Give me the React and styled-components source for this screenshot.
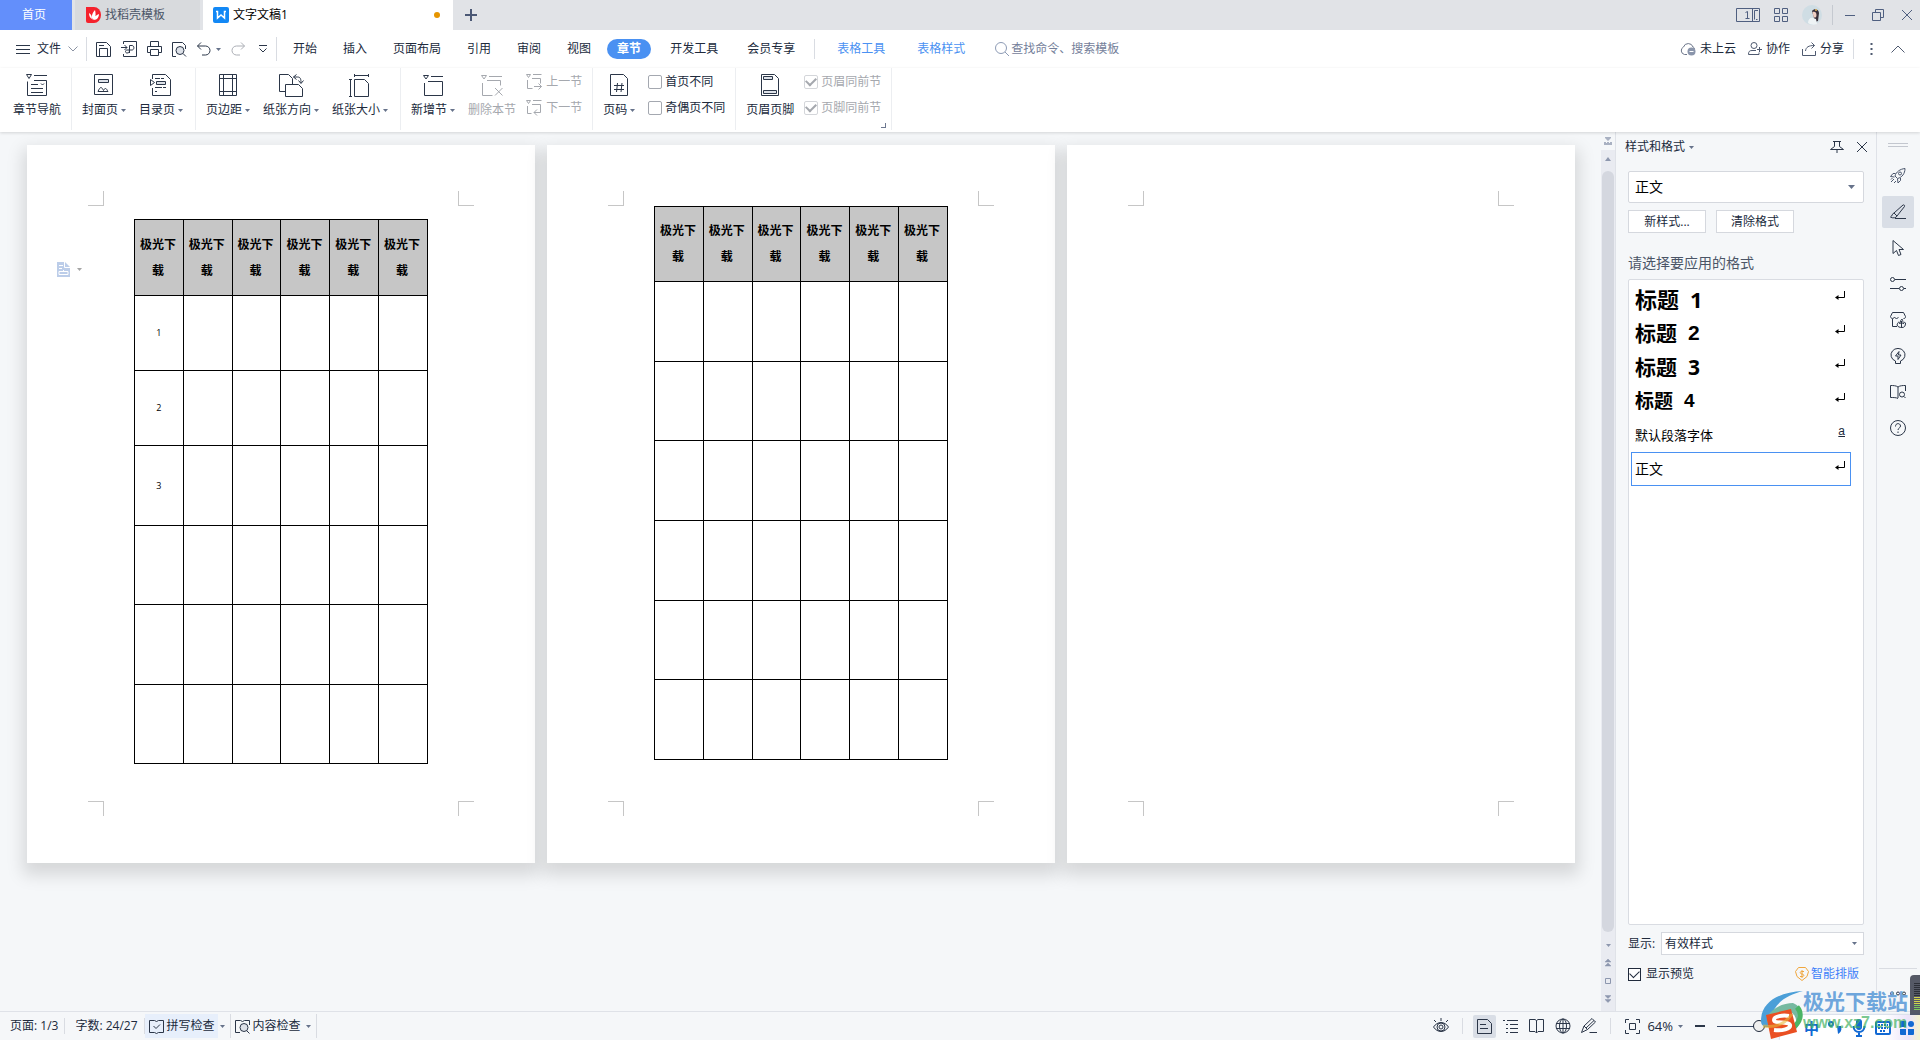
import { useState } from 'react'
import styled, { createGlobalStyle } from 'styled-components'

const HEADERS = ['极光下载', '极光下载', '极光下载', '极光下载', '极光下载', '极光下载']

const PAGES = [
  { id: 1, offset: 13, headHeight: 76, rows: [['1', 75], ['2', 75], ['3', 80], ['', 79], ['', 80], ['', 79]] },
  { id: 2, offset: 0, headHeight: 75, rows: [['', 80], ['', 79], ['', 80], ['', 80], ['', 79], ['', 80]] },
  { id: 3, offset: 0, rows: [] }
]

const STYLES = [
  { name: '标题', num: '1', size: 22 },
  { name: '标题', num: '2', size: 21, heavy: true },
  { name: '标题', num: '3', size: 21 },
  { name: '标题', num: '4', size: 19, heavy: true },
  { name: '默认段落字体', size: 13, mark: 'a' },
  { name: '正文', size: 14 }
]

//Icons-------------------------------------------------------------------------

const Svg = ({ w = 16, h = 16, color = '#2b3648', children }) => (
  <svg
    width={w}
    height={h}
    viewBox={`0 0 ${w} ${h}`}
    fill="none"
    stroke={color}
    strokeWidth="1"
    aria-hidden="true"
  >
    {children}
  </svg>
)

const Caret = ({ color = '#66728a' }) => (
  <svg width="5" height="3" viewBox="0 0 5 3" aria-hidden="true">
    <path d="M0 0h5L2.5 3z" fill={color} />
  </svg>
)

const NavIcon = () => (
  <Svg w={22} h={22}>
    <path d="M.5 .5h5L3 4.500zM8 1.5h13M1.5 7.5v14h19v-15H8M5 10.5h7M5 14.5h12M5 18.5h12M15 9.5l1.5 1.5L18 9.5" />
  </Svg>
)
const CoverIcon = () => (
  <Svg w={20} h={22}>
    <path d="M.5 .5h18v20H.5z" />
    <path d="M4.5 5.5h10v3h-10z" fill="#dde1e8" />
    <path d="M4 17.5c1-2.500 2-4 3-4s1.500 1.500 2.500 3c.5-1 1-2 2-2s1.500 1.500 2.500 3z" />
  </Svg>
)
const TocIcon = () => (
  <Svg w={22} h={22}>
    <path d="M2.5 5V.5h13l5 5v16h-18V14M.5 5.5v6l4-3z" />
    <path d="M6.5 7.5h9v3h-9z" fill="#dde1e8" />
    <path d="M5 4.5h5M11 4.5h3M5 13.5h7M13 13.5h3M5 17.5h2" />
  </Svg>
)
const MarginIcon = () => (
  <Svg w={18} h={22}>
    <path d="M.5 .5h17v21H.5zM4.5 .5v21M13.5 .5v21M.5 4.5h17M.5 17.5h17" />
  </Svg>
)
const OrientIcon = () => (
  <Svg w={25} h={23}>
    <path d="M6.5 17.5h-6V.5h9l4 4V10M6.5 10.5h13l4 4v8h-17zM17.5 .5l-3 2.500 3 2.500M14.500 3h4c3 0 3.500 2 3.500 6M19.5 6.500L22 9.500l2.500-3" />
  </Svg>
)
const SizeIcon = () => (
  <Svg w={22} h={23}>
    <path d="M5.5 5.5h10l4 4v13h-14zM1.5 5v17M0 5.5h3M0 22.5h3M5 1.5h15M5.5 0v3M19.5 0v3" />
  </Svg>
)
const AddSectionIcon = () => (
  <Svg w={20} h={22}>
    <path d="M.5 1.5h5L3 5zM8 2.5h12M1.5 9v12.500h18v-14H5" />
  </Svg>
)
const DelSectionIcon = () => (
  <Svg w={22} h={22} color="#a5a8ae">
    <path d="M.5 1.5h5L3 5zM8 2.5h13M1.5 9v12.500h10M6 6.5h13.500v5M14 14l7.500 7.500M21.500 14L14 21.500" />
  </Svg>
)
const PrevSectionIcon = () => (
  <Svg color="#a5a8ae">
    <path d="M.5 .5h4l-2 3zM7 .5h8.500M1.5 6v8.500h5M6 4.5h8.500v5M8 12.5h7.500M12.5 9.5l3 3-3 3" />
  </Svg>
)
const NextSectionIcon = () => (
  <Svg color="#a5a8ae">
    <path d="M.5 .5h4l-2 3zM7 .5h8.500M1.5 6v7.500h4M6 4.5h8.500v8H8M11 9.500l-3 3 3 3" />
  </Svg>
)
const PageNumIcon = () => (
  <Svg w={18} h={22}>
    <path d="M.5 .5h13l4 4v17H.5zM7.500 9l-1 9M12 9l-1 9M4 11.5h10M4 15.5h10" />
  </Svg>
)
const HeaderFooterIcon = () => (
  <Svg w={18} h={22}>
    <path d="M.5 .5h13l4 4v17H.5z" />
    <path d="M2.5 2.5h9v3h-9zM2.5 16.5h13v3h-13z" fill="#dde1e8" />
  </Svg>
)
const ReturnMark = () => (
  <Svg w={10} h={9} color="#000">
    <path d="M9.500 0v6.500H1" />
    <path d="M0 6.500L3.500 4v5z" fill="#000" stroke="none" />
  </Svg>
)

//Page sheet--------------------------------------------------------------------

const Sheet = ({ page }) => (
  <Paper>
    <CropRow>
      <Crop $v="bottom" $h="right" />
      <Crop $v="bottom" $h="left" />
    </CropRow>
    {page.rows.length > 0 && (
      <DocTable $offset={page.offset}>
        <thead>
          <DocRow $height={page.headHeight}>
            {HEADERS.map((text, i) => (
              <HeadCell key={i}>{text}</HeadCell>
            ))}
          </DocRow>
        </thead>
        <tbody>
          {page.rows.map(([label, height], i) => (
            <DocRow key={i} $height={height}>
              {HEADERS.map((_, c) => (
                <Cell key={c}>{c === 0 ? label : ''}</Cell>
              ))}
            </DocRow>
          ))}
        </tbody>
      </DocTable>
    )}
    <CropRow $last>
      <Crop $v="top" $h="right" />
      <Crop $v="top" $h="left" />
    </CropRow>
    {page.id === 1 && (
      <PasteHint aria-label="粘贴选项">
        <svg width="13" height="15" viewBox="0 0 13 15" aria-hidden="true">
          <path d="M0 0h8l5 5v10H0z" fill="#bccde9" />
          <path d="M7.5 0v5.500H13M2 3.5h4M2 6.5h3M2 9.5h9v3H2zM6.5 8v2" stroke="#fff" fill="none" />
        </svg>
        <Caret color="#a5a5a5" />
      </PasteHint>
    )}
  </Paper>
)

const RibbonItem = ({ icon, label, caret, disabled }) => (
  <RibbonButton disabled={disabled}>
    <RibbonIcon>{icon}</RibbonIcon>
    <RibbonLabel>
      {label}
      {caret && <Caret />}
    </RibbonLabel>
  </RibbonButton>
)

const App = () => {
  const [tab, setTab] = useState('章节')
  const [selected, setSelected] = useState(5)
  const [firstDiff, setFirstDiff] = useState(false)
  const [oddEven, setOddEven] = useState(false)
  const [preview, setPreview] = useState(true)

  return (
    <Shell>
      <GlobalStyle />

      <TitleBar>
        <HomeTab>首页</HomeTab>
        <DocerTab>
          <svg width="15" height="16" viewBox="0 0 15 16" aria-hidden="true">
            <path d="M0 0h8a7 8 0 0 1 0 16H2a2 2 0 0 1-2-2z" fill="#f5222d" />
            <path d="M7 13C5 10 6 6 9 3c1 4 1 8-2 10zM6 12c-2-1-3-3-3-6 2 1 3 3 3 6zM8 13c0-3 2-5 5-6 0 3-2 6-5 6z" fill="#fff" />
          </svg>
          找稻壳模板
        </DocerTab>
        <DocTab>
          <svg width="16" height="16" viewBox="0 0 16 16" aria-hidden="true">
            <rect width="16" height="16" rx="2" fill="#1388f5" />
            <path d="M3 4.5h1.500V11L8 8l3.500 3V4.5H13" stroke="#fff" strokeWidth="1.500" fill="none" />
          </svg>
          文字文稿1
          <Unsaved />
        </DocTab>
        <IconButton aria-label="新建">
          <Svg w={12} h={12} color="#4b5875">
            <path d="M6 0v12M0 6h12" strokeWidth="2" />
          </Svg>
        </IconButton>
        <WindowTools>
          <Svg w={24} h={14} color="#4f5f80">
            <path d="M.5 .5h23v13H.5zM16.5 .5v13M22 2.5h-3.500v9M20 11.5h1.500M9.500 4.5l2-1v7M9.500 10.5h4" />
          </Svg>
          <Svg w={14} h={14} color="#4f5f80">
            <path d="M.5 .5h5v5h-5zM8.5 .5h5v5h-5zM.5 8.5h5v5h-5zM8.5 8.5h5v5h-5z" />
          </Svg>
          <svg width="20" height="20" viewBox="0 0 20 20" aria-hidden="true">
            <circle cx="10" cy="10" r="10" fill="#cfdde4" />
            <path d="M10 6c2-3 7-2 7 2l-1 8-3 1-1-4z" fill="#39303a" />
            <path d="M10.500 7c2-1 4 0 4 3s-2 3-3 2z" fill="#f1cfc4" />
            <path d="M6 18c0-4 3-6 5-5l3 1 1 5c-3 1-6 1-9-1z" fill="#eef3f5" />
            <circle cx="14" cy="5" r="1" fill="#e2b45c" />
          </svg>
          <WindowButtons>
            <IconButton aria-label="最小化">
              <Svg w={10} h={12} color="#4f5f80"><path d="M0 6.5h10" /></Svg>
            </IconButton>
            <IconButton aria-label="还原">
              <Svg w={12} h={12} color="#4f5f80"><path d="M.5 3.5h8v8h-8zM3.5 3V.5h8v8H9" /></Svg>
            </IconButton>
            <IconButton aria-label="关闭">
              <Svg w={12} h={12} color="#4f5f80"><path d="M1 1l10 10M11 1L1 11" /></Svg>
            </IconButton>
          </WindowButtons>
        </WindowTools>
      </TitleBar>

      <MenuBar>
        <FileButton>
          <Svg w={14} h={11}><path d="M0 1.5h14M0 5.5h14M0 9.5h14" /></Svg>
          文件
          <Svg w={10} h={6} color="#8b93a3"><path d="M.5 .5L5 5 9.500 .5" /></Svg>
        </FileButton>
        <QuickTools>
          <IconButton aria-label="保存">
            <Svg w={15} h={15}><path d="M.5 .5h10l4 4v10H.5zM3.5 14V6.5h8V14M3 3.5h5" /></Svg>
          </IconButton>
          <IconButton aria-label="输出为PDF">
            <Svg w={16} h={16}><path d="M2.5 3V.5h13v15h-13V13M0 6.5h6M3.5 4L6 6.500 3.500 9M8.500 12V4.500H11c2.500 0 2.500 4.500 0 4.500H6c-2 0-2 3 0 3s2.500-1 2.500-3" /></Svg>
          </IconButton>
          <IconButton aria-label="打印">
            <Svg w={15} h={16}><path d="M3.5 5V.5h8V5M3.5 11.5h-3v-6h14v6h-3M3.5 8.5h8v6h-8z" /></Svg>
          </IconButton>
          <IconButton aria-label="打印预览">
            <Svg w={15} h={15}>
              <path d="M4 14.5H.5V.5h10l3 3V7M11 11.500l3 3" />
              <circle cx="8" cy="8.500" r="4" fill="#dde1e8" />
            </Svg>
          </IconButton>
          <UndoGroup>
            <IconButton aria-label="撤销">
              <Svg w={14} h={14}><path d="M4 .5L.5 4 4 7.500M.5 4h8a4.500 4.500 0 0 1 0 9H5" /></Svg>
            </IconButton>
            <Caret />
          </UndoGroup>
          <IconButton aria-label="恢复">
            <Svg w={14} h={14} color="#abaeb5"><path d="M10 .5L13.500 4 10 7.500M13.500 4h-8a4.500 4.500 0 0 0 0 9H9" /></Svg>
          </IconButton>
          <IconButton aria-label="自定义快速访问工具栏">
            <Svg w={8} h={8}><path d="M0 .5h8M.5 3.5L4 7l3.500-3.500" /></Svg>
          </IconButton>
        </QuickTools>
        <Tabs>
          {['开始', '插入', '页面布局', '引用', '审阅', '视图', '章节', '开发工具', '会员专享'].map(name => (
            <Tab key={name} $active={name === tab} onClick={() => setTab(name)}>
              {name}
            </Tab>
          ))}
        </Tabs>
        <Tabs $context>
          {['表格工具', '表格样式'].map(name => (
            <Tab key={name} $context $active={name === tab} onClick={() => setTab(name)}>
              {name}
            </Tab>
          ))}
        </Tabs>
        <Search>
          <Svg w={14} h={14} color="#8d9bb5"><circle cx="6" cy="6" r="5.500" /><path d="M10 10l4 4" /></Svg>
          <input type="text" aria-label="查找命令" placeholder="查找命令、搜索模板" />
        </Search>
        <ShareTools>
          <TextButton>
            <Svg w={16} h={14} color="#6b7589">
              <path d="M7 12.5H4.500a4 4 0 0 1-1-7.500 5 5 0 0 1 9.500 0c1 .5 1.500 1 1.500 2" />
              <circle cx="11.500" cy="9.500" r="4" fill="#8a95ab" stroke="none" />
              <path d="M9.500 9.500h4" stroke="#fff" />
            </Svg>
            未上云
          </TextButton>
          <TextButton>
            <Svg w={14} h={14} color="#4f5a70">
              <circle cx="6" cy="3.500" r="3" />
              <path d="M8 8.500H4c-2.500 0-3.500 1-3.500 4h10.500v-2M9 7.500h5M11.500 5v5" />
            </Svg>
            协作
          </TextButton>
          <TextButton>
            <Svg w={14} h={14} color="#4f5a70"><path d="M.5 7v6.500h13V9M3.500 9c.5-4 3-5.500 9-5.500M9.500 .5l3 3-3 3" /></Svg>
            分享
          </TextButton>
          <MoreTools>
            <Svg w={3} h={12} color="#4f5a70"><path d="M1.500 0v2M1.500 5v2M1.500 10v2" strokeWidth="2" /></Svg>
            <Svg w={14} h={8} color="#4f5a70"><path d="M.5 7.500L7 1l6.500 6.500" /></Svg>
          </MoreTools>
        </ShareTools>
      </MenuBar>

      <Ribbon>
        <Group>
          <RibbonItem icon={<NavIcon />} label="章节导航" />
        </Group>
        <Group $wide>
          <RibbonItem icon={<CoverIcon />} label="封面页" caret />
          <RibbonItem icon={<TocIcon />} label="目录页" caret />
        </Group>
        <Group $wide>
          <RibbonItem icon={<MarginIcon />} label="页边距" caret />
          <RibbonItem icon={<OrientIcon />} label="纸张方向" caret />
          <RibbonItem icon={<SizeIcon />} label="纸张大小" caret />
        </Group>
        <Group>
          <RibbonItem icon={<AddSectionIcon />} label="新增节" caret />
          <RibbonItem icon={<DelSectionIcon />} label="删除本节" disabled />
          <Stack $near>
            <TextButton disabled><PrevSectionIcon />上一节</TextButton>
            <TextButton disabled><NextSectionIcon />下一节</TextButton>
          </Stack>
        </Group>
        <Group>
          <RibbonItem icon={<PageNumIcon />} label="页码" caret />
          <Stack>
            <Check>
              <input type="checkbox" checked={firstDiff} onChange={() => setFirstDiff(!firstDiff)} />
              首页不同
            </Check>
            <Check>
              <input type="checkbox" checked={oddEven} onChange={() => setOddEven(!oddEven)} />
              奇偶页不同
            </Check>
          </Stack>
        </Group>
        <Group>
          <RibbonItem icon={<HeaderFooterIcon />} label="页眉页脚" />
          <Stack $near>
            <Check $disabled><input type="checkbox" checked disabled readOnly />页眉同前节</Check>
            <Check $disabled><input type="checkbox" checked disabled readOnly />页脚同前节</Check>
          </Stack>
          <Launcher aria-label="页眉页脚设置" />
        </Group>
      </Ribbon>

      <Body>
        <Canvas>
          {PAGES.map(page => (
            <Sheet key={page.id} page={page} />
          ))}
        </Canvas>

        <ScrollColumn>
          <SplitHandle>
            <svg width="8" height="8" viewBox="0 0 8 8" aria-hidden="true">
              <path d="M1 0h6v1L4 4 1 1zM0 5h2v1h1V5h2v1h1V5h2v3H0z" fill="#a9b1c2" />
            </svg>
          </SplitHandle>
          <ScrollStep aria-label="向上滚动">
            <svg width="6" height="4" viewBox="0 0 6 4"><path d="M0 4h6L3 0z" fill="#8d97ae" /></svg>
          </ScrollStep>
          <Thumb />
          <ScrollStep aria-label="向下滚动"><Caret color="#8d97ae" /></ScrollStep>
          <ScrollStep aria-label="上一页">
            <svg width="6" height="8" viewBox="0 0 6 8"><path d="M0 3h6L3 0zM0 7h6L3 4z" fill="#8d97ae" stroke="#8d97ae" strokeWidth=".5" /></svg>
          </ScrollStep>
          <ScrollStep aria-label="选择浏览对象"><Svg w={6} h={6} color="#8d97ae"><path d="M.5 .5h5v5h-5z" /></Svg></ScrollStep>
          <ScrollStep aria-label="下一页">
            <svg width="6" height="8" viewBox="0 0 6 8"><path d="M0 .5h6l-3 3zM0 4.500h6l-3 3z" fill="#8d97ae" stroke="#8d97ae" strokeWidth=".5" /></svg>
          </ScrollStep>
        </ScrollColumn>

        <Panel>
          <PanelHead>
            <TextButton>样式和格式<Caret /></TextButton>
            <PanelActions>
              <IconButton aria-label="固定">
                <Svg w={14} h={14}><path d="M3 1.5h8M4.500 2v4.500L.5 9.500h13l-4-3V2M7 10v3" /></Svg>
              </IconButton>
              <IconButton aria-label="关闭窗格">
                <Svg w={12} h={12}><path d="M1 1l10 10M11 1L1 11" /></Svg>
              </IconButton>
            </PanelActions>
          </PanelHead>
          <Current>
            <input type="text" aria-label="当前样式" defaultValue="正文" />
            <svg width="7" height="4" viewBox="0 0 7 4" aria-hidden="true"><path d="M0 0h7L3.500 4z" fill="#66728a" /></svg>
          </Current>
          <PanelButtons>
            <PanelButton>新样式...</PanelButton>
            <PanelButton>清除格式</PanelButton>
          </PanelButtons>
          <PanelCaption>请选择要应用的格式</PanelCaption>
          <StyleList>
            {STYLES.map((item, i) => (
              <StyleItem key={i} $selected={i === selected} onClick={() => setSelected(i)}>
                <StyleName $size={item.size} $bold={!!item.num} $heavy={item.heavy}>
                  {item.name}
                  {item.num && <span>{item.num}</span>}
                </StyleName>
                <Mark>{item.mark ? <u>{item.mark}</u> : <ReturnMark />}</Mark>
              </StyleItem>
            ))}
          </StyleList>
          <ShowRow>
            <label htmlFor="show">显示:</label>
            <SelectBox>
              <select id="show" defaultValue="有效样式">
                <option>有效样式</option>
                <option>所有样式</option>
              </select>
              <Caret />
            </SelectBox>
          </ShowRow>
          <PreviewRow>
            <Check $dark>
              <input type="checkbox" checked={preview} onChange={() => setPreview(!preview)} />
              显示预览
            </Check>
            <SmartLink href="#layout">
              <Svg w={14} h={14} color="#f0a63c">
                <path d="M3.500 .5h7l3 4-1.500 5-5 4-5-4-1.500-5z" />
                <path d="M9 4.500H6.500C4.500 4.500 5 7 7 7s2.500 2.500 .5 2.500H5M7 3v8" />
              </Svg>
              智能排版
            </SmartLink>
          </PreviewRow>
        </Panel>

        <Side>
          <Svg w={20} h={5} color="#c3c7cf"><path d="M0 .5h20M0 3.5h20" /></Svg>
          <SideList>
            <SideButton aria-label="快速工具">
              <Svg color="#4b566c">
                <path d="M5 8c1-4 5-7 10-7.500 0 5-3 9-7.500 10zM5.500 5.500H3L.5 8.500l4 .5M10.500 10v2.500L8 15l-.5-4M4 11l-3 3M6 13l-2 2M2.500 10L1 11.500" />
                <circle cx="10" cy="5.500" r="1.500" />
              </Svg>
            </SideButton>
            <SideButton aria-label="样式" $active>
              <Svg><path d="M4 9l9-8c1-.5 2 .5 1.500 1.500L7 12M4 9c-2 .5-1.500 3-3.500 4 2 1.500 6 1 6.500-1zM4 9l3 3M5 14.500h11" /></Svg>
            </SideButton>
            <SideButton aria-label="选择">
              <Svg><path d="M3 .5v13l3.500-3 2 5 2.500-1-2-5h4.500z" /></Svg>
            </SideButton>
            <SideButton aria-label="属性">
              <Svg><circle cx="2.500" cy="3.500" r="2" /><path d="M5 3.5h11M0 12.5h9M14 12.5h2" /><circle cx="11.500" cy="12.500" r="2" /></Svg>
            </SideButton>
            <SideButton aria-label="素材">
              <Svg>
                <path d="M2.500 7v7.500H7M2.500 .5h11l2 4c0 2-1 2-2 2M2.500 .5l-2 4c0 2 3 3 4 .5 1 2 3 2 4 0" />
                <path d="M7 13c1-3 2-4 3-1 0-3 1-4 2-5 1 2 1 3 1 5 1-2 2-2 2.500-1 0 3-1 4.500-3.500 4.500S8 15 7 13zM11.500 9v6" />
              </Svg>
            </SideButton>
            <SideButton aria-label="灵感">
              <Svg><path d="M5.500 13a7 6.500 0 1 1 5 0v2.500h-5zM9 3.500L5.500 8H8v3.500L11 7H8.500z" /></Svg>
            </SideButton>
            <SideButton aria-label="阅读">
              <Svg><path d="M8 3v11M8 3C6 1.500 3 1.500 .5 1.500v12c3 0 6 0 7.500 1M8 3c2-1.500 5-1.500 7.500-1.500V7" /><circle cx="12" cy="10.500" r="2.500" /><path d="M14 12.500l1.500 1.500" /></Svg>
            </SideButton>
            <SideButton aria-label="帮助">
              <Svg><circle cx="8" cy="8" r="7.500" /><path d="M5.500 6.500c0-4 5-3.500 5-.5 0 2-2.500 2-2.500 4M8 11.500v1.500" /></Svg>
            </SideButton>
          </SideList>
          <SideMore aria-label="更多">
            <Svg w={16} h={5}><circle cx="2" cy="2.500" r="1.500" /><circle cx="8" cy="2.500" r="1.500" /><circle cx="14" cy="2.500" r="1.500" /></Svg>
          </SideMore>
        </Side>
      </Body>

      <StatusBar>
        <StatusItem>页面: 1/3</StatusItem>
        <StatusItem>字数: 24/27</StatusItem>
        <StatusMenu $on>
          <button>
            <Svg w={15} h={15}><path d="M5.500 1.5h-5v12h5l2 1 2-1h5v-12h-5l-2 1zM4.500 7L7 9.500l4-4" /></Svg>
            拼写检查
          </button>
          <Caret />
        </StatusMenu>
        <StatusMenu>
          <button>
            <Svg w={15} h={15}>
              <path d="M5 13.5H.5v-12h5l2 1 2-1h5V6M12 12l2.500 2.500" />
              <circle cx="9" cy="8.500" r="4" fill="#dde1e8" />
            </Svg>
            内容检查
          </button>
          <Caret />
        </StatusMenu>
        <ViewTools>
          <ViewButton aria-label="护眼模式">
            <Svg><path d="M.5 9c4-6 11-6 15 0-4 6-11 6-15 0zM8 0v3M1 2l2 2M15 2l-2 2" /><circle cx="8" cy="9" r="4" /><circle cx="8" cy="9" r="2" /></Svg>
          </ViewButton>
          <Divider />
          <ViewButton aria-label="页面视图" $active>
            <Svg w={15} h={15}><path d="M.5 .5h10l4 4v10H.5zM3 5.5h6M3 9.5h8" /></Svg>
          </ViewButton>
          <ViewButton aria-label="大纲">
            <Svg w={15} h={14}><path d="M0 1.5h2M4 1.5h11M3 5.5h2M7 5.5h8M3 9.5h2M7 9.5h8M3 13.5h2M7 13.5h8" /></Svg>
          </ViewButton>
          <ViewButton aria-label="阅读版式">
            <Svg w={15} h={15}><path d="M.5 .5H6l1.500 1L9 .5h5.500v12H9l-1.500 1.500L6 12.500H.5zM7.5 1.500V14" /></Svg>
          </ViewButton>
          <ViewButton aria-label="Web版式">
            <Svg><circle cx="8" cy="8" r="7" /><ellipse cx="8" cy="8" rx="3.500" ry="7" /><path d="M1 5.5h14M1 10.5h14M8 1v14" /></Svg>
          </ViewButton>
          <ViewButton aria-label="写作模式">
            <Svg><path d="M.5 14.500L3 8l8-7.500L14.500 4l-8 7.500zM3 8l3.500 3.500M5 10l8-7.500M8.500 14.500H16" /></Svg>
          </ViewButton>
          <Divider />
          <ViewButton aria-label="最佳显示比例">
            <Svg w={15} h={15}><path d="M.5 4V.5H4M11 .5h3.500V4M14.500 11v3.500H11M4 14.500H.5V11M4.500 4.500h6v6h-6z" /></Svg>
          </ViewButton>
          <Zoom>64%<Caret /></Zoom>
          <ViewButton aria-label="缩小">
            <Svg w={10} h={10}><path d="M0 5h10" strokeWidth="2" /></Svg>
          </ViewButton>
          <Slider type="range" aria-label="显示比例" min="0" max="100" defaultValue="50" />
        </ViewTools>
      </StatusBar>

      <Meter>
        {Array.from({ length: 14 }, (_, i) => (
          <i key={i} />
        ))}
      </Meter>
      <ImeBar>
        <strong>中</strong>
        <svg width="16" height="14" viewBox="0 0 16 14" aria-hidden="true">
          <circle cx="3" cy="3" r="2" fill="none" stroke="#1269d3" strokeWidth="2" />
          <path d="M9 5h4c1 4 0 6-3 8z" fill="#1269d3" />
        </svg>
        <svg width="14" height="18" viewBox="0 0 14 18" aria-hidden="true">
          <rect x="4" y="0" width="6" height="11" rx="3" fill="#1269d3" />
          <path d="M1.500 7c0 8 11 8 11 0M7 13v4M4 17h6" fill="none" stroke="#1269d3" strokeWidth="2" />
        </svg>
        <svg width="16" height="14" viewBox="0 0 16 14" aria-hidden="true">
          <rect x="1" y="1" width="14" height="12" rx="1" fill="none" stroke="#1269d3" strokeWidth="2" />
          <path d="M3 4h10M3 7h10M5 10h6" stroke="#1269d3" strokeWidth="2" strokeDasharray="2 1" />
        </svg>
        <svg width="14" height="14" viewBox="0 0 14 14" aria-hidden="true">
          <path d="M0 1a1 1 0 0 1 1-1h5v6H0zM0 8h6v6H1a1 1 0 0 1-1-1zM8 8h6v5a1 1 0 0 1-1 1H8z" fill="#1269d3" />
          <circle cx="11" cy="3" r="3" fill="#1269d3" />
        </svg>
      </ImeBar>
      <Watermark>
        <svg width="42" height="50" viewBox="0 0 42 50" aria-hidden="true">
          <path d="M0 31C0 12 18 2 42 1 26 5 12 13 9 31c5-9 15-16 26-15C21 19 10 28 10 36 4 38 0 36 0 31z" fill="#4b9fd8" />
          <path d="M6 27c6-10 17-14 26-14 10 4 11 15 3 26 2-10-2-18-9-18-8 0-14 5-20 12z" fill="#76b9a0" />
          <path d="M36 17c6 7 3 15-4 21" fill="none" stroke="#4bb566" strokeWidth="5" />
          <path d="M5 25l25-6 6 23-26 7z" fill="#ea4f22" />
          <path d="M28 26c-6-1-15 0-15 4s15 1 16 5-8 6-16 5" fill="none" stroke="#fff" strokeWidth="4" />
          <path d="M2 36c12 2 22-2 29-12" fill="none" stroke="#e8b53b" strokeOpacity=".6" strokeWidth="3" />
        </svg>
        <WatermarkText>
          <b>极光下载站</b>
          <em>www.xz7.com</em>
        </WatermarkText>
      </Watermark>
    </Shell>
  )
}

//Style-------------------------------------------------------------------------

const GlobalStyle = createGlobalStyle`
  * {
    box-sizing: border-box;
  }
  body {
    margin: 0;
    overflow: hidden;
  }
  body, button, input, select {
    font-family: "Open Sans", "Noto Sans CJK SC", sans-serif;
    font-size: 12px;
    line-height: 16px;
    color: #202a3c;
  }
  button, input, select {
    border: 0;
    padding: 0;
    margin: 0;
    background: none;
    outline: none;
  }
  svg {
    display: block;
    flex: none;
  }
`

const Shell = styled.div`
  position: relative;
  display: flex;
  flex-direction: column;
  height: 100vh;
  background: #f5f7f9;
  overflow: hidden;
`

const IconButton = styled.button`
  display: flex;
  align-items: center;
  justify-content: center;
`

const TextButton = styled.button`
  display: flex;
  align-items: center;
  gap: 4px;
  white-space: nowrap;
  color: ${props => (props.disabled ? '#a5a8ae' : '#202a3c')};
`

const Divider = styled.span`
  width: 1px;
  height: 16px;
  margin: 0 7px;
  background: #d9dce2;
`

const TitleBar = styled.header`
  display: flex;
  flex: none;
  height: 30px;
  background: #e1e3e7;
`

const HomeTab = styled.button`
  width: 72px;
  margin-right: 3px;
  padding-right: 4px;
  background: #638ffb;
  color: #fff;
`

const DocerTab = styled.button`
  display: flex;
  align-items: center;
  gap: 4px;
  width: 125px;
  margin-right: 3px;
  padding-left: 11px;
  background: #d8dadd;
  color: #4b5567;
`

const DocTab = styled.button`
  display: flex;
  align-items: center;
  gap: 4px;
  width: 250px;
  margin-right: 12px;
  padding: 0 13px 0 10px;
  background: #fff;
  color: #000;
`

const Unsaved = styled.span`
  width: 6px;
  height: 6px;
  margin-left: auto;
  border-radius: 50%;
  background: #e69500;
`

const WindowTools = styled.div`
  display: flex;
  align-items: center;
  gap: 14px;
  margin-left: auto;
  padding-right: 7px;
`

const WindowButtons = styled.div`
  display: flex;
  align-items: center;
  gap: 17px;
  height: 20px;
  margin-left: -4px;
  padding-left: 12px;
  border-left: 1px solid #c5c9d0;
`

const MenuBar = styled.nav`
  display: flex;
  flex: none;
  align-items: center;
  height: 38px;
  background: #fff;
`

const FileButton = styled.button`
  display: flex;
  align-items: center;
  gap: 7px;
  height: 24px;
  padding: 0 8px 0 16px;
  border-right: 1px solid #d9dce2;
`

const QuickTools = styled.div`
  display: flex;
  align-items: center;
  gap: 10px;
  height: 24px;
  padding: 0 9px;
  border-right: 1px solid #d9dce2;

  & > :last-child {
    margin-left: 4px;
  }
`

const UndoGroup = styled.span`
  display: flex;
  align-items: center;
  gap: 5px;
`

const Tabs = styled.div`
  display: flex;
  align-items: center;
  gap: ${props => (props.$context ? 12 : 6)}px;
  height: 20px;
  padding: 0 ${props => (props.$context ? 20 : 9)}px 0 ${props => (props.$context ? 12 : 6)}px;
  border-left: ${props => (props.$context ? '1px solid #d9dce2' : '0')};
`

const Tab = styled.button`
  height: 20px;
  padding: 0 10px;
  border-radius: 10px;
  white-space: nowrap;
  font-weight: ${props => (props.$active ? 700 : 400)};
  background: ${props => (props.$active ? '#4a91f2' : 'transparent')};
  color: ${props => (props.$active ? '#fff' : props.$context ? '#4a91f2' : '#202a3c')};

  &:nth-child(n + 8) {
    margin-left: 3px;
  }
`

const Search = styled.label`
  display: flex;
  align-items: center;
  gap: 2px;

  input {
    width: 140px;
  }
  input::placeholder {
    color: #74809a;
    opacity: 1;
  }
`

const ShareTools = styled.div`
  display: flex;
  align-items: center;
  gap: 12px;
  margin-left: auto;
`

const MoreTools = styled.div`
  display: flex;
  align-items: center;
  gap: 18px;
  height: 20px;
  margin-left: -3px;
  padding: 0 15px 0 16px;
  border-left: 1px solid #d9dce2;
`

const Ribbon = styled.section`
  display: flex;
  flex: none;
  height: 64px;
  padding: 0 0 2px 3px;
  background: #fff;
  box-shadow: 0 1px 3px rgba(0, 0, 0, 0.14);
  z-index: 1;
`

const Group = styled.div`
  display: flex;
  gap: 13px;
  position: relative;
  padding: 0 ${props => (props.$wide ? 12 : 10)}px 0 10px;
  border-right: 1px solid #eceef1;
`

const RibbonButton = styled.button`
  display: flex;
  flex-direction: column;
  align-items: center;
  padding-top: 5px;
  color: ${props => (props.disabled ? '#a5a8ae' : '#202a3c')};
`

const RibbonIcon = styled.span`
  display: flex;
  align-items: center;
  height: 24px;
  margin-bottom: 5px;
`

const RibbonLabel = styled.span`
  display: flex;
  align-items: center;
  gap: 3px;
  white-space: nowrap;
`

const Stack = styled.div`
  display: flex;
  flex-direction: column;
  gap: 10px;
  margin-left: ${props => (props.$near ? -3 : 0)}px;
  padding-top: 6px;
`

const Check = styled.label`
  display: flex;
  align-items: center;
  gap: ${props => (props.$dark ? 5 : 3)}px;
  white-space: nowrap;
  color: ${props => (props.$disabled ? '#a5a8ae' : '#202a3c')};

  input {
    appearance: none;
    display: grid;
    place-items: center;
    width: ${props => (props.$dark ? 13 : 14)}px;
    height: ${props => (props.$dark ? 13 : 14)}px;
    border: 1px solid ${props => (props.$dark ? '#202a3c' : props.$disabled ? '#d4d6da' : '#a4a8b0')};
    border-radius: ${props => (props.$dark ? 0 : 2)}px;
    background: #fff;
  }
  input:checked::after {
    content: '';
    width: 8px;
    height: 5px;
    margin-bottom: 3px;
    border: solid ${props => (props.$disabled ? '#a5a8ae' : '#202a3c')};
    border-width: 0 0 ${props => (props.$disabled ? '2px 2px' : '1px 1px')};
    transform: rotate(-45deg);
  }
`

const Launcher = styled.button`
  position: absolute;
  right: 5px;
  bottom: 2px;
  width: 5px;
  height: 5px;
  border: solid #6d7890;
  border-width: 0 1px 1px 0;
`

const Body = styled.main`
  display: flex;
  flex: 1;
  min-height: 0;
`

const Canvas = styled.div`
  display: flex;
  flex: 1;
  align-items: flex-start;
  gap: 12px;
  padding: 13px 0 0 27px;
  overflow: hidden;
`

const Paper = styled.article`
  position: relative;
  display: flex;
  flex-direction: column;
  flex: none;
  width: 508px;
  min-height: 718px;
  padding: 46px 61px 47px;
  background: #fff;
  box-shadow: 0 8px 16px 4px rgba(0, 0, 0, 0.13);
`

const CropRow = styled.div`
  display: flex;
  justify-content: space-between;
  margin-top: ${props => (props.$last ? 'auto' : 0)};
`

const Crop = styled.span`
  width: 16px;
  height: 15px;
  border: 0 solid #c6c6c6;
  border-${props => props.$v}-width: 1px;
  border-${props => props.$h}-width: 1px;
`

const DocTable = styled.table`
  align-self: center;
  width: 294px;
  margin-top: ${props => props.$offset}px;
  border-collapse: collapse;
  table-layout: fixed;
`

const DocRow = styled.tr`
  height: ${props => props.$height}px;
`

const HeadCell = styled.th`
  padding: 0 6px 0 4px;
  border: 1px solid #000;
  background: #c6c6c6;
  color: #000;
  line-height: 26px;
  word-break: break-all;
`

const Cell = styled.td`
  padding: 0;
  border: 1px solid #000;
  color: #000;
  font-size: 9px;
  text-align: center;
`

const PasteHint = styled.button`
  position: absolute;
  left: 30px;
  top: 117px;
  display: flex;
  align-items: center;
  gap: 7px;
`

const ScrollColumn = styled.div`
  display: flex;
  flex-direction: column;
  align-items: center;
  width: 14px;
  padding-bottom: 3px;
  background: #e9ebf1;
`

const SplitHandle = styled.div`
  display: flex;
  align-items: center;
  justify-content: center;
  width: 14px;
  height: 18px;
  background: #f5f7f9;
`

const ScrollStep = styled.button`
  display: flex;
  align-items: center;
  justify-content: center;
  width: 14px;
  height: 18px;
`

const Thumb = styled.div`
  flex: 1;
  width: 12px;
  margin: 3px 0 4px;
  border-radius: 6px;
  background: #d4d7df;
`

const Panel = styled.aside`
  display: flex;
  flex-direction: column;
  width: 262px;
  padding: 0 12px;
  border: solid #dfe2e8;
  border-width: 0 1px;
`

const PanelHead = styled.div`
  display: flex;
  justify-content: space-between;
  align-items: center;
  height: 30px;
  margin-left: -3px;
`

const PanelActions = styled.div`
  display: flex;
  gap: 12px;
  margin-right: -4px;
`

const Current = styled.div`
  display: flex;
  align-items: center;
  height: 32px;
  margin-top: 9px;
  padding: 0 8px 0 6px;
  border: 1px solid #d5d8de;
  border-radius: 2px;
  background: #fff;

  input {
    flex: 1;
    min-width: 0;
    font-size: 14px;
    color: #000;
  }
`

const PanelButtons = styled.div`
  display: flex;
  gap: 10px;
  margin-top: 7px;
`

const PanelButton = styled.button`
  width: 78px;
  height: 23px;
  border: 1px solid #d5d8de;
  background: #fff;
`

const PanelCaption = styled.p`
  margin: 20px 0 6px;
  font-size: 14px;
  line-height: 20px;
  color: #4b5567;
`

const StyleList = styled.div`
  flex: 1;
  min-height: 0;
  padding: 2px 12px 0 2px;
  border: 1px solid #d9dce2;
  border-radius: 2px;
  background: #fff;
`

const StyleItem = styled.button`
  display: flex;
  align-items: center;
  justify-content: space-between;
  width: 100%;
  height: 34px;
  padding: 0 5px 0 3px;
  border: 1px solid ${props => (props.$selected ? '#4a91f2' : 'transparent')};
`

const StyleName = styled.span`
  display: flex;
  gap: 11px;
  font-size: ${props => props.$size}px;
  font-weight: ${props => (props.$bold ? 700 : 400)};
  line-height: 24px;
  color: #000;

  span {
    font-family: ${props => (props.$heavy ? '"Liberation Sans"' : '"Open Sans"')}, sans-serif;
  }
`

const Mark = styled.span`
  padding-bottom: 8px;
  font-family: 'Liberation Sans', sans-serif;
`

const ShowRow = styled.div`
  display: flex;
  align-items: center;
  justify-content: space-between;
  margin-top: 7px;
`

const SelectBox = styled.span`
  display: flex;
  align-items: center;
  width: 203px;
  height: 23px;
  padding: 0 6px 0 3px;
  border: 1px solid #d5d8de;
  background: #fff;

  select {
    appearance: none;
    flex: 1;
  }
`

const PreviewRow = styled.div`
  display: flex;
  align-items: center;
  justify-content: space-between;
  margin: 11px 0 29px;
  padding-right: 5px;
`

const SmartLink = styled.a`
  display: flex;
  align-items: center;
  gap: 2px;
  color: #417ff9;
  text-decoration: none;
`

const Side = styled.aside`
  display: flex;
  flex-direction: column;
  align-items: center;
  width: 43px;
  padding: 11px 1px 0 0;
`

const SideList = styled.div`
  display: flex;
  flex: 1;
  flex-direction: column;
  gap: 4px;
  margin-top: 12px;
`

const SideButton = styled.button`
  display: flex;
  align-items: center;
  justify-content: center;
  width: 32px;
  height: 32px;
  border-radius: 2px;
  background: ${props => (props.$active ? '#d9dee6' : 'transparent')};
`

const SideMore = styled.button`
  display: flex;
  justify-content: center;
  width: 38px;
  height: 43px;
  padding-top: 22px;
  border-top: 1px solid #d9dce2;
`

const StatusBar = styled.footer`
  display: flex;
  flex: none;
  align-items: center;
  height: 29px;
  border-top: 1px solid #dfe2e8;
`

const StatusItem = styled.span`
  padding: 0 6px 0 10px;
  border-right: 1px solid #d9dce2;
  white-space: nowrap;
`

const StatusMenu = styled.span`
  display: flex;
  align-items: center;
  gap: 2px;
  padding-right: 5px;
  border-right: 1px solid #d9dce2;

  button {
    display: flex;
    align-items: center;
    gap: 3px;
    height: 24px;
    padding: 0 3px 0 4px;
    background: ${props => (props.$on ? '#e7effb' : 'transparent')};
  }
`

const ViewTools = styled.div`
  display: flex;
  align-items: center;
  gap: 3px;
  margin-left: auto;
  padding-right: 119px;
`

const ViewButton = styled.button`
  display: flex;
  align-items: center;
  justify-content: center;
  width: 23px;
  height: 23px;
  border-radius: 2px;
  background: ${props => (props.$active ? '#d9dee6' : 'transparent')};
`

const Zoom = styled.button`
  display: flex;
  align-items: center;
  gap: 5px;
  padding-right: 2px;
  font-size: 13px;
`

const Slider = styled.input`
  appearance: none;
  width: 84px;
  height: 12px;
  margin-left: 3px;
  background: linear-gradient(#3b4a68, #3b4a68) center / 100% 1px no-repeat;

  &::-webkit-slider-thumb {
    appearance: none;
    width: 12px;
    height: 12px;
    border: 1px solid #202a3c;
    border-radius: 50%;
    background: #f0f0f0;
  }
`

const Meter = styled.div`
  position: absolute;
  right: 0;
  bottom: 25px;
  display: flex;
  flex-direction: column;
  gap: 1px;
  width: 10px;
  height: 40px;
  padding: 8px 0 0 4px;
  border-radius: 4px 0 0 0;
  background: #555966;
  overflow: hidden;

  i {
    flex: none;
    height: 1px;
    background: #2c2f38;
  }
  i:nth-child(n + 8) {
    background: #d3d34a;
  }
  i:nth-child(n + 12) {
    background: #7fc95a;
  }
`

const ImeBar = styled.div`
  position: absolute;
  right: 0;
  bottom: 0;
  display: flex;
  align-items: center;
  justify-content: space-between;
  width: 140px;
  height: 25px;
  padding: 0 6px 0 24px;
  background: linear-gradient(90deg, #fff 75%, #ece4fa 92%, #f6f3ce);
  box-shadow: 0 0 2px rgba(60, 90, 160, 0.4);

  strong {
    font-size: 15px;
    color: #1269d3;
  }
`

const Watermark = styled.div`
  position: absolute;
  right: 12px;
  bottom: 0;
  display: flex;
  pointer-events: none;
`

const WatermarkText = styled.div`
  display: flex;
  flex-direction: column;

  b {
    font-size: 21px;
    line-height: 22px;
    color: #6ea6dc;
  }
  em {
    font-family: 'Liberation Sans', sans-serif;
    font-size: 16px;
    font-style: normal;
    font-weight: 700;
    line-height: 22px;
    color: rgba(64, 176, 96, 0.7);
  }
`

export default App
